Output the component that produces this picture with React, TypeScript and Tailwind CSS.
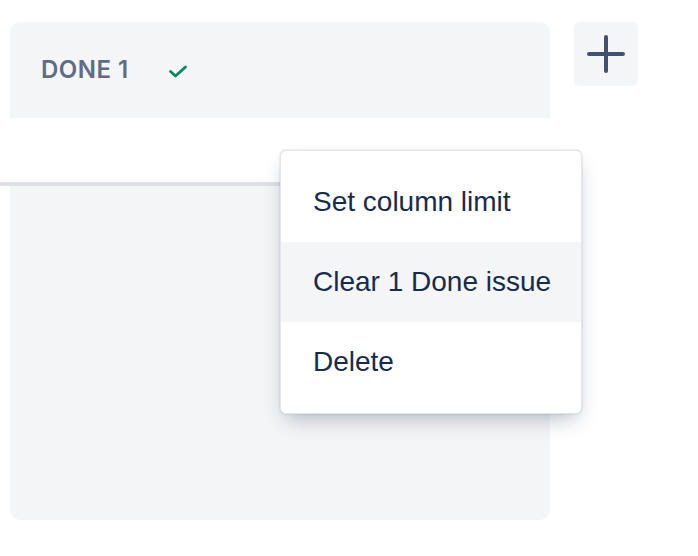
import { useState } from 'react'

const menuItems = ['Set column limit', 'Clear 1 Done issue', 'Delete']

function CheckIcon() {
  return (
    <svg width="20" height="14" viewBox="0 0 20 14" fill="none">
      <path d="M2.5 6.5 L7.5 11 L17.5 2" stroke="#00875a" strokeWidth="2.8" strokeLinecap="round" strokeLinejoin="round" />
    </svg>
  )
}

function PlusIcon() {
  return (
    <svg width="40" height="40" viewBox="0 0 40 40" fill="none">
      <path d="M20 3 V37 M3 20 H37" stroke="#42526e" strokeWidth="4" strokeLinecap="round" />
    </svg>
  )
}

function App() {
  const [hovered] = useState(1)

  return (
    <div className="relative w-[698px] h-[556px] bg-white overflow-hidden font-['Liberation_Sans',Arial,sans-serif]">
      <div className="flex items-start gap-6 pl-[10px] pt-[22px]">
        {/* Column */}
        <div className="flex flex-col w-[540px] h-[498px] bg-[#f4f5f7] rounded-[10px]">
          <div className="flex items-center h-[96px] pl-[31px] shrink-0">
            <span className="font-['Inter',sans-serif] text-[24px] font-semibold uppercase text-[#5e6c84] tracking-[0.02em]">Done 1</span>
            <span className="ml-[39px] flex items-center mt-[4px]">
              <CheckIcon />
            </span>
          </div>
          {/* sticky strip */}
          <div className="-ml-[10px] w-[550px] h-[68px] shrink-0 bg-white border-b-4 border-[#dfe1e6]" />
          <div className="flex-1" />
        </div>

        {/* Add column */}
        <button className="w-16 h-16 rounded-[6px] bg-[#f4f5f7] flex items-center justify-center">
          <PlusIcon />
        </button>
      </div>

      {/* Dropdown menu */}
      <div className="absolute left-[280px] top-[150px] w-[302px] bg-white rounded-[6px] border border-[#e4e6ea] py-[11px] shadow-[0_10px_20px_-6px_rgba(9,30,66,0.3),0_0_2px_rgba(9,30,66,0.2)]">
        {menuItems.map((item, i) => (
          <div
            key={item}
            className={`h-[80px] flex items-center pl-8 pr-4 whitespace-nowrap text-[28px] text-[#172b4d] ${i === hovered ? 'bg-[#f4f5f7]' : ''}`}
          >
            {item}
          </div>
        ))}
      </div>
    </div>
  )
}

export default App
